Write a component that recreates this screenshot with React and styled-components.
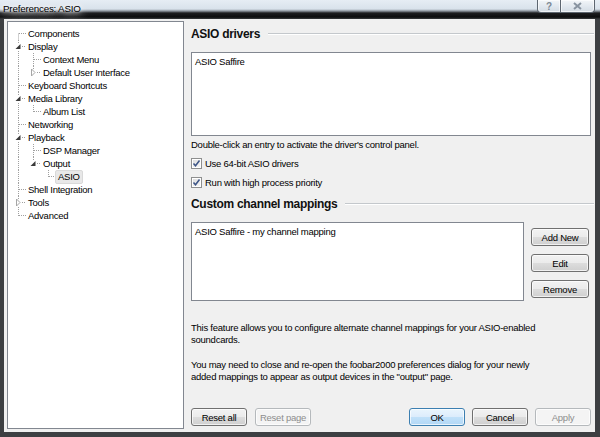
import React from "react";
import styled, { createGlobalStyle } from "styled-components";

const GlobalStyle = createGlobalStyle`
  html, body {
    margin: 0;
    padding: 0;
    background: #3a3a3a;
    overflow: hidden;
  }
  body {
    font-family: "Liberation Sans", Arial, sans-serif;
    color: #000;
  }
`;

const Window = styled.div`
  width: 600px;
  height: 437px;
  display: flex;
  flex-direction: column;
  background: #3d3f42;
`;

const TitleBar = styled.div`
  height: 19px;
  display: flex;
  align-items: flex-start;
  background: linear-gradient(
    to bottom,
    #e6edf4 0px,
    #d9e2eb 9px,
    #8d959e 11px,
    #1d1e20 13px,
    #0c0d0e 17px,
    #3a3c3f 19px
  );
`;

const Title = styled.span`
  margin: 3px 0 0 3px;
  font-size: 9.8px;
  letter-spacing: -0.2px;
  line-height: 11px;
  text-shadow: 0 0 4px #fff, 0 0 8px #fff, 0 0 12px #fff, 0 0 16px #f4f7fa;
`;

const Caption = styled.div`
  margin-left: auto;
  margin-right: 5px;
  display: flex;
`;

const CaptionButton = styled.div`
  width: ${(p) => p.$w}px;
  height: 13px;
  box-sizing: border-box;
  display: flex;
  align-items: center;
  justify-content: center;
  border: 1px solid #5d6670;
  border-top: none;
  border-left-width: ${(p) => (p.$first ? 1 : 0)}px;
  border-radius: ${(p) => (p.$first ? "0 0 0 4px" : "0 0 4px 0")};
  background: linear-gradient(to bottom, #f3f6f9, #dfe6ed 60%, #d3dbe3);
  box-shadow: inset 0 0 0 1px rgba(255, 255, 255, 0.6);
`;

const Frame = styled.div`
  flex: 1;
  display: flex;
  padding: 0 5px 5px 4px;
  min-height: 0;
`;

const Client = styled.div`
  flex: 1;
  display: grid;
  grid-template-columns: 177px 1fr;
  column-gap: 7px;
  padding: 2px 4px 3px 3px;
  background: #f0f0f0;
  font-size: 9.5px;
  letter-spacing: -0.25px;
`;

const TreePanel = styled.div`
  background: #fff;
  border: 1px solid #828790;
  padding: 5px 0 0 3px;
  overflow: hidden;
`;

const TreeRow = styled.div`
  display: flex;
  align-items: center;
  height: 13px;
`;

const TreeLabel = styled.span`
  padding: 0 2px;
  line-height: 12px;
  white-space: nowrap;
  border: 1px solid ${(p) => (p.$selected ? "#d9d9d9" : "transparent")};
  border-radius: 2px;
  background: ${(p) => (p.$selected ? "#e8e8e8" : "transparent")};
  margin-left: -1px;
`;

const Pane = styled.div`
  display: flex;
  flex-direction: column;
  padding: 5px 0 3px 0;
  min-width: 0;
`;

const Heading = styled.div`
  display: flex;
  align-items: center;
  gap: 8px;
  height: 16px;
  margin-top: ${(p) => p.$top || 0}px;
  margin-right: -3px;
  font-size: 12px;
  font-weight: bold;
  letter-spacing: -0.3px;
  color: #111;

  &::after {
    content: "";
    flex: 1;
    border-top: 1px solid #c4c8cc;
    border-bottom: 1px solid #fff;
  }
`;

const ListBox = styled.div`
  box-sizing: border-box;
  height: ${(p) => p.$h}px;
  width: ${(p) => (p.$w ? `${p.$w}px` : "auto")};
  margin-top: ${(p) => p.$top || 0}px;
  background: #fff;
  border: 1px solid #828790;
  padding: 2px 3px;
  line-height: 13px;
`;

const Hint = styled.p`
  margin: ${(p) => p.$top || 0}px 0 0;
  line-height: 12px;
`;

const CheckRow = styled.label`
  display: flex;
  align-items: center;
  gap: 3px;
  height: 14px;
  margin-top: 5px;
`;

const Box = styled.span`
  width: 11px;
  height: 11px;
  box-sizing: border-box;
  border: 1px solid #8e8f8f;
  background: linear-gradient(135deg, #dcdcdc, #f6f6f6);
  box-shadow: inset 0 0 0 1px #fff;
  display: flex;
  align-items: center;
  justify-content: center;
`;

const MappingRow = styled.div`
  display: flex;
  gap: 7px;
  margin-top: 10px;
`;

const SideButtons = styled.div`
  display: flex;
  flex-direction: column;
  gap: 8px;
  padding-top: 6px;
`;

const Footer = styled.div`
  margin-top: auto;
  display: flex;
  justify-content: space-between;
`;

const ButtonGroup = styled.div`
  display: flex;
  gap: ${(p) => p.$gap}px;
`;

const Button = styled.button`
  width: ${(p) => p.$w || 56}px;
  height: 18px;
  padding: 0;
  font-family: inherit;
  font-size: 9.5px;
  letter-spacing: -0.25px;
  border-radius: 3px;
  color: ${(p) => (p.$variant === "disabled" ? "#8d8d8d" : "#000")};
  border: 1px solid
    ${(p) =>
      p.$variant === "default" ? "#3c7fb1" : p.$variant === "disabled" ? "#b5b9bc" : "#707070"};
  background: ${(p) =>
    p.$variant === "default"
      ? "linear-gradient(#e9f5fd 0, #dcecfc 50%, #c1e1f9 50%, #b2d7f5 100%)"
      : p.$variant === "disabled"
      ? "#f4f4f4"
      : "linear-gradient(#f2f2f2 0, #ebebeb 50%, #dddddd 50%, #cfcfcf 100%)"};
  box-shadow: inset 0 0 0 1px rgba(255, 255, 255, 0.7);
`;

const tree = [
  { label: "Components" },
  {
    label: "Display",
    open: true,
    children: [
      { label: "Context Menu" },
      { label: "Default User Interface", open: false, children: [{ label: "-" }] },
    ],
  },
  { label: "Keyboard Shortcuts" },
  { label: "Media Library", open: true, children: [{ label: "Album List" }] },
  { label: "Networking" },
  {
    label: "Playback",
    open: true,
    children: [
      { label: "DSP Manager" },
      { label: "Output", open: true, children: [{ label: "ASIO", selected: true }] },
    ],
  },
  { label: "Shell Integration" },
  { label: "Tools", open: false, children: [{ label: "-" }] },
  { label: "Advanced" },
];

function flatten(nodes, guides = [], out = []) {
  nodes.forEach((n, i) => {
    const last = i === nodes.length - 1;
    const first = guides.length === 0 && i === 0;
    out.push({ ...n, guides, last, first });
    if (n.children && n.open) flatten(n.children, [...guides, !last], out);
  });
  return out;
}

const dot = { stroke: "#a0a0a0", strokeWidth: 1, strokeDasharray: "1 1" };

function Guide({ on }) {
  return (
    <svg width="15" height="13" style={{ flex: "none" }}>
      {on && <line x1="7.5" y1="0" x2="7.5" y2="13" {...dot} />}
    </svg>
  );
}

function Connector({ node }) {
  const kids = !!node.children;
  return (
    <svg width="15" height="13" style={{ flex: "none" }}>
      {kids ? (
        <>
          {!node.first && <line x1="7.5" y1="0" x2="7.5" y2="3" {...dot} />}
          {!node.last && <line x1="7.5" y1="11" x2="7.5" y2="13" {...dot} />}
          <line x1="11" y1="6.5" x2="15" y2="6.5" {...dot} />
          {node.open ? (
            <polygon points="9.5,4 9.5,9 4.5,9" fill="#3a3a3a" />
          ) : (
            <polygon points="5.5,3 9,6.5 5.5,10" fill="#fff" stroke="#a6a6a6" />
          )}
        </>
      ) : (
        <>
          <line
            x1="7.5"
            y1={node.first ? 6.5 : 0}
            x2="7.5"
            y2={node.last ? 7 : 13}
            {...dot}
          />
          <line x1="8" y1="6.5" x2="15" y2="6.5" {...dot} />
        </>
      )}
    </svg>
  );
}

function Tree() {
  const rows = flatten(tree);
  return (
    <TreePanel>
      {rows.map((r, i) => (
        <TreeRow key={i}>
          {r.guides.map((g, j) => (
            <Guide key={j} on={g} />
          ))}
          <Connector node={r} />
          <TreeLabel $selected={r.selected}>{r.label}</TreeLabel>
        </TreeRow>
      ))}
    </TreePanel>
  );
}

function Check({ children }) {
  return (
    <CheckRow>
      <Box>
        <svg width="9" height="9" viewBox="0 0 9 9">
          <path d="M1.5 4.5 L3.5 6.8 L7.5 1.5" fill="none" stroke="#3d5587" strokeWidth="1.5" />
        </svg>
      </Box>
      {children}
    </CheckRow>
  );
}

export default function App() {
  return (
    <>
      <GlobalStyle />
      <Window>
        <TitleBar>
          <Title>Preferences: ASIO</Title>
          <Caption>
            <CaptionButton $w={24} $first>
              <span style={{ fontSize: 10, fontWeight: "bold", color: "#7d8894" }}>?</span>
            </CaptionButton>
            <CaptionButton $w={34}>
              <svg width="9" height="8" viewBox="0 0 9 8">
                <path d="M1 1 L8 7 M8 1 L1 7" stroke="#8893a0" strokeWidth="2" />
              </svg>
            </CaptionButton>
          </Caption>
        </TitleBar>
        <Frame>
          <Client>
            <Tree />
            <Pane>
              <Heading>ASIO drivers</Heading>
              <ListBox $h={84} $top={10}>ASIO Saffire</ListBox>
              <Hint $top={3}>Double-click an entry to activate the driver's control panel.</Hint>
              <Check>Use 64-bit ASIO drivers</Check>
              <Check>Run with high process priority</Check>
              <Heading $top={7}>Custom channel mappings</Heading>
              <MappingRow>
                <ListBox $h={79} $w={333}>ASIO Saffire - my channel mapping</ListBox>
                <SideButtons>
                  <Button $w={58}>Add New</Button>
                  <Button $w={58}>Edit</Button>
                  <Button $w={58}>Remove</Button>
                </SideButtons>
              </MappingRow>
              <Hint $top={21}>
                This feature allows you to configure alternate channel mappings for your ASIO-enabled
                <br />
                soundcards.
              </Hint>
              <Hint $top={13}>
                You may need to close and re-open the foobar2000 preferences dialog for your newly
                <br />
                added mappings to appear as output devices in the "output" page.
              </Hint>
              <Footer>
                <ButtonGroup $gap={8}>
                  <Button>Reset all</Button>
                  <Button $variant="disabled">Reset page</Button>
                </ButtonGroup>
                <ButtonGroup $gap={7}>
                  <Button $variant="default">OK</Button>
                  <Button>Cancel</Button>
                  <Button $variant="disabled">Apply</Button>
                </ButtonGroup>
              </Footer>
            </Pane>
          </Client>
        </Frame>
      </Window>
    </>
  );
}
